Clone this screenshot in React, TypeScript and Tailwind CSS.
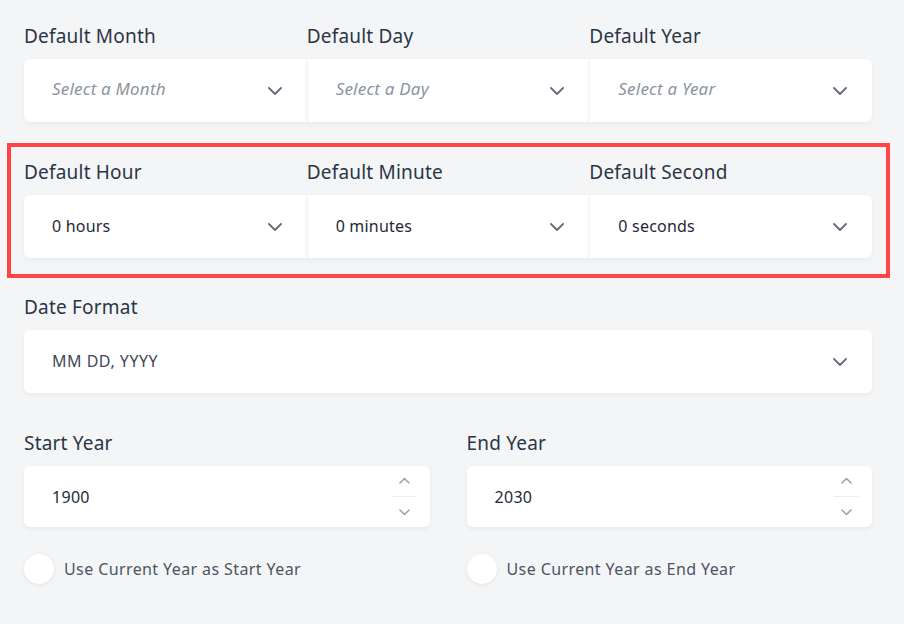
import React from "react";

const Chevron = () => (
  <svg width="14" height="8" viewBox="0 0 14 8" fill="none" className="shrink-0">
    <path d="M1 1l6 6 6-6" stroke="#6b7280" strokeWidth="2" strokeLinecap="round" strokeLinejoin="round" />
  </svg>
);

const SmallChevron = ({ up }: { up?: boolean }) => (
  <svg width="11" height="7" viewBox="0 0 11 7" fill="none" className="block">
    <path
      d={up ? "M1 6l4.5-4.5L10 6" : "M1 1l4.5 4.5L10 1"}
      stroke="#9ca3af"
      strokeWidth="1.6"
      strokeLinecap="round"
      strokeLinejoin="round"
    />
  </svg>
);

type SelProps = { text: string; placeholder?: boolean; pos: "l" | "m" | "r" | "full"; muted?: boolean };

const Select = ({ text, placeholder, pos, muted }: SelProps) => {
  const round =
    pos === "l"
      ? "rounded-l-md"
      : pos === "r"
      ? "rounded-r-md border-l border-[#eff1f3]"
      : pos === "m"
      ? "border-l border-[#eff1f3]"
      : "rounded-md";
  return (
    <div
      className={`flex h-[63px] items-center justify-between bg-white pl-7 pr-[25px] shadow-[0_2px_5px_rgba(0,0,0,0.05)] ${round}`}
    >
      <span
        className={
          placeholder
            ? "pb-[3px] text-[17px] italic tracking-[0.2px] text-[#8b95a1]"
            : muted
            ? "pb-[2px] text-[16px] tracking-[0.5px] text-[#3f4a57]"
            : "pb-[2px] text-[16px] tracking-[0.2px] text-[#1f2937]"
        }
      >
        {text}
      </span>
      <Chevron />
    </div>
  );
};

const Label = ({ children }: { children: React.ReactNode }) => (
  <div className="mb-[11px] h-6 text-[19px] leading-6 tracking-[0.2px] text-[#2b3645]">{children}</div>
);

const TripleRow = ({ items }: { items: { label: string; text: string; placeholder?: boolean }[] }) => (
  <div className="grid grid-cols-3">
    {items.map((it, i) => (
      <div key={it.label}>
        <Label>{it.label}</Label>
        <Select text={it.text} placeholder={it.placeholder} pos={i === 0 ? "l" : i === 2 ? "r" : "m"} />
      </div>
    ))}
  </div>
);

const NumberInput = ({ value }: { value: string }) => (
  <div className="flex h-[61px] items-center justify-between rounded-md bg-white pl-7 pr-[13px] shadow-[0_2px_5px_rgba(0,0,0,0.05)]">
    <span className="text-[16px] tracking-[0.3px] text-[#1f2937]">{value}</span>
    <div className="flex w-[25px] flex-col items-center gap-3">
      <SmallChevron up />
      <div className="h-px w-full bg-[#eceef1]" />
      <SmallChevron />
    </div>
  </div>
);

const Radio = ({ label }: { label: string }) => (
  <div className="mt-[27px] flex items-center gap-[10px]">
    <div className="h-[30px] w-[30px] rounded-full bg-white shadow-[0_1px_4px_rgba(0,0,0,0.08)]" />
    <span className="text-[16px] tracking-[0.4px] text-[#4a5563]">{label}</span>
  </div>
);

export default function App() {
  return (
    <div
      className="min-h-screen bg-[#f4f5f7] px-6 pt-6"
      style={{ fontFamily: '"Noto Sans", "Open Sans", sans-serif' }}
    >
      <div className="w-[848px]">
        <TripleRow
          items={[
            { label: "Default Month", text: "Select a Month", placeholder: true },
            { label: "Default Day", text: "Select a Day", placeholder: true },
            { label: "Default Year", text: "Select a Year", placeholder: true },
          ]}
        />
        <div className="relative mt-[38px]">
          <div className="pointer-events-none absolute -left-[17px] -right-[18px] -top-[17px] -bottom-[20px] border-4 border-[#ff4545]" />
          <TripleRow
            items={[
              { label: "Default Hour", text: "0 hours" },
              { label: "Default Minute", text: "0 minutes" },
              { label: "Default Second", text: "0 seconds" },
            ]}
          />
        </div>
        <div className="mt-[37px]">
          <Label>Date Format</Label>
          <Select text="MM DD, YYYY" pos="full" muted />
        </div>
        <div className="mt-[38px] grid grid-cols-2 gap-x-[37px]">
          <div>
            <Label>Start Year</Label>
            <NumberInput value="1900" />
            <Radio label="Use Current Year as Start Year" />
          </div>
          <div>
            <Label>End Year</Label>
            <NumberInput value="2030" />
            <Radio label="Use Current Year as End Year" />
          </div>
        </div>
      </div>
    </div>
  );
}
